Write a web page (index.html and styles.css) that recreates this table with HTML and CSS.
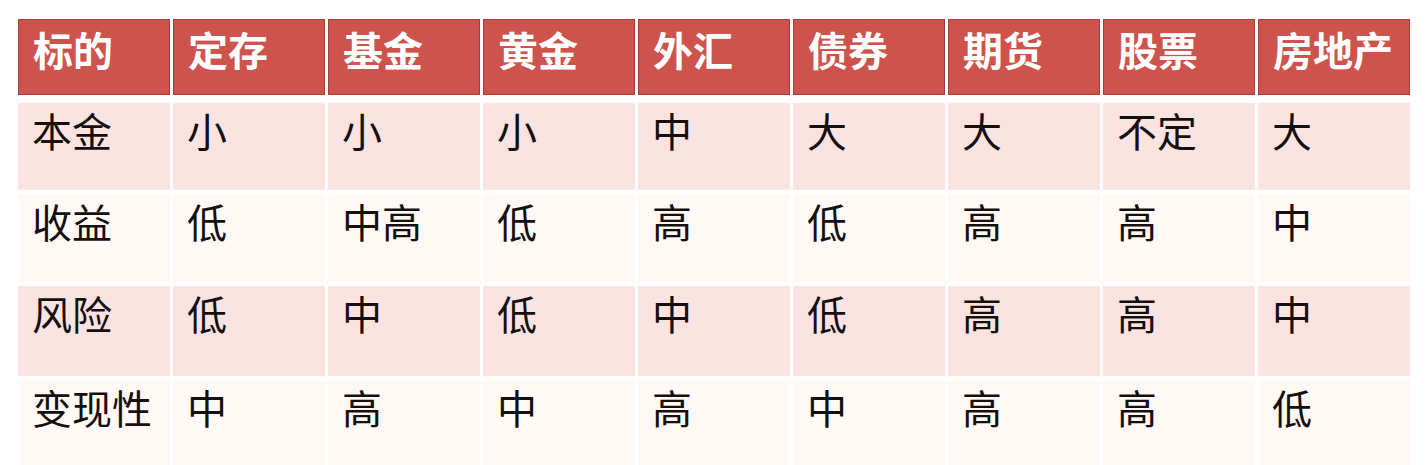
FILE: index.html
```html
<!DOCTYPE html>
<html lang="zh-CN">
<head>
<meta charset="utf-8">
<title>投资标的比较</title>
<link rel="stylesheet" href="styles.css">
</head>
<body>
<div class="table">
  <div class="row head">
    <div class="cell">标的</div><div class="cell">定存</div><div class="cell">基金</div><div class="cell">黄金</div><div class="cell">外汇</div><div class="cell">债券</div><div class="cell">期货</div><div class="cell">股票</div><div class="cell">房地产</div>
  </div>
  <div class="row pink r1">
    <div class="cell">本金</div><div class="cell">小</div><div class="cell">小</div><div class="cell">小</div><div class="cell">中</div><div class="cell">大</div><div class="cell">大</div><div class="cell">不定</div><div class="cell">大</div>
  </div>
  <div class="row light r2">
    <div class="cell">收益</div><div class="cell">低</div><div class="cell">中高</div><div class="cell">低</div><div class="cell">高</div><div class="cell">低</div><div class="cell">高</div><div class="cell">高</div><div class="cell">中</div>
  </div>
  <div class="row pink r3">
    <div class="cell">风险</div><div class="cell">低</div><div class="cell">中</div><div class="cell">低</div><div class="cell">中</div><div class="cell">低</div><div class="cell">高</div><div class="cell">高</div><div class="cell">中</div>
  </div>
  <div class="row light r4">
    <div class="cell">变现性</div><div class="cell">中</div><div class="cell">高</div><div class="cell">中</div><div class="cell">高</div><div class="cell">中</div><div class="cell">高</div><div class="cell">高</div><div class="cell">低</div>
  </div>
</div>
</body>
</html>
```

FILE: styles.css
```css
html, body {
  margin: 0;
  padding: 0;
  background: #ffffff;
  overflow: hidden;
}
body {
  font-family: "Noto Sans CJK SC", "Noto Sans", sans-serif;
  color: #141010;
}
.table {
  display: flex;
  flex-direction: column;
  gap: 4px;
  padding: 19px 18px 0 18px;
}
.row {
  display: grid;
  grid-template-columns: repeat(9, 152px);
  column-gap: 3px;
}
.cell {
  font-size: 40px;
  line-height: 46px;
  padding: 4px 0 0 14px;
  box-sizing: border-box;
}
.head {
  height: 76px;
  margin-bottom: 4px;
}
.head .cell {
  background: #cf534d;
  border: 1px solid #a23f3a;
  color: #ffffff;
  font-weight: 700;
  padding-top: 6px;
}
.r1 { height: 87px; }
.r2 { height: 88px; }
.r3 { height: 90px; }
.r4 { height: 90px; }
.pink .cell { background: #fbe3e1; }
.light .cell { background: #fff8f5; }
```
